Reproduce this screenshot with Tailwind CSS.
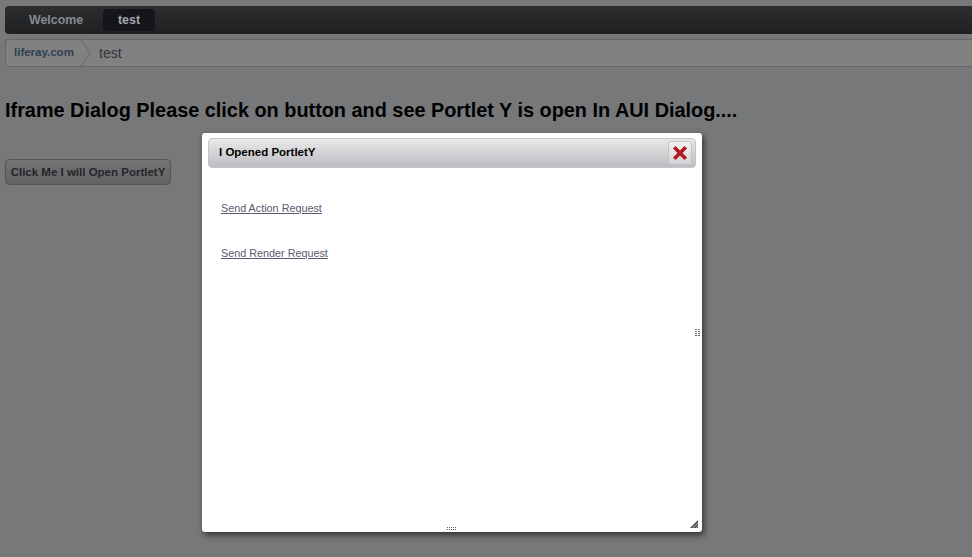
<!DOCTYPE html>
<html><head><meta charset="utf-8"><script src="https://cdn.jsdelivr.net/npm/@tailwindcss/browser@4"></script></head>
<body class="m-0 h-[557px] w-[972px] overflow-hidden relative bg-[#77787a] font-['Liberation_Sans',Arial,sans-serif]">
<div class="pl-[5px] pt-[6px]">
  <nav class="h-[28px] rounded-l-[4px] bg-gradient-to-b from-[#2c2e2f] to-[#1e2021] flex items-center pl-[24px] text-[12.4px] font-bold">
    <span class="text-[#858c90] w-[74px]">Welcome</span>
    <span class="w-[52px] h-[22px] rounded-[4px] bg-[#141619] text-[#a6a8ac] flex items-center justify-center">test</span>
  </nav>
  <div class="mt-[5px] h-[28px] rounded-l-[4px] border border-r-0 border-[#666767] bg-[#818181] flex items-center relative">
    <span class="text-[11.5px] font-bold text-[#2d3f55] pl-[8px] w-[93px]">liferay.com</span>
    <svg class="absolute left-[74px] top-[-1px]" width="12" height="28" viewBox="0 0 12 28"><path d="M0.5 0 L10.5 14 L0.5 28" fill="#818181" stroke="#666767"/></svg>
    <span class="text-[14px] text-[#2f353d]">test</span>
  </div>
  <h1 class="mt-[31px] text-[19.87px] leading-[24px] font-bold text-black">Iframe Dialog Please click on button and see Portlet Y is open In AUI Dialog....</h1>
  <button class="mt-[37px] w-[166px] h-[26px] pt-[1px] rounded-[4px] border border-[#555657] bg-gradient-to-b from-[#747474] to-[#626262] text-[11.5px] font-bold text-[#25252c] flex items-center justify-center whitespace-nowrap">Click Me I will Open PortletY</button>
</div>
<div class="absolute left-[202px] top-[133px] w-[500px] h-[399px] bg-white rounded-[3px] shadow-[2px_3px_6px_rgba(0,0,0,0.6)]">
  <div class="mx-[6px] mt-[5px] h-[30px] rounded-[4px] border border-[#c4c4c6] bg-gradient-to-b from-[#e9e9eb] to-[#bebec2] flex items-center justify-between pl-[10px] pr-[3px]">
    <span class="text-[11.5px] font-bold text-black">I Opened PortletY</span>
    <span class="w-[24px] h-[24px] rounded-[3px] border border-[#c2c2c4] bg-gradient-to-b from-[#f3f3f4] to-[#d2d2d4] flex items-center justify-center">
      <svg width="14" height="14" viewBox="0 0 14 14"><path d="M2.5 2.5 L11.5 11.5 M11.5 2.5 L2.5 11.5" stroke="#b5161c" stroke-width="3.6" stroke-linecap="square"/></svg>
    </span>
  </div>
  <div class="pl-[19px] pt-[34px] text-[10.8px] leading-[13px] text-[#5a5a6e] flex flex-col gap-[32px]">
    <a class="underline">Send Action Request</a>
    <a class="underline">Send Render Request</a>
  </div>
  <div class="absolute right-[2px] top-[196px] grid grid-cols-2 gap-[1px]">
    <i class="w-[2px] h-[1px] bg-[#777]"></i><i class="w-[2px] h-[1px] bg-[#777]"></i><i class="w-[2px] h-[1px] bg-[#777]"></i><i class="w-[2px] h-[1px] bg-[#777]"></i><i class="w-[2px] h-[1px] bg-[#777]"></i><i class="w-[2px] h-[1px] bg-[#777]"></i><i class="w-[2px] h-[1px] bg-[#555]"></i><i class="w-[2px] h-[1px] bg-[#555]"></i>
  </div>
  <div class="absolute left-[245px] bottom-[2px] grid grid-cols-5 gap-x-[1px] gap-y-[1px]">
    <i class="w-[1px] h-[1px] bg-[#666]"></i><i class="w-[1px] h-[1px] bg-[#666]"></i><i class="w-[1px] h-[1px] bg-[#666]"></i><i class="w-[1px] h-[1px] bg-[#666]"></i><i class="w-[1px] h-[1px] bg-[#666]"></i><i class="w-[1px] h-[1px] bg-[#555]"></i><i class="w-[1px] h-[1px] bg-[#555]"></i><i class="w-[1px] h-[1px] bg-[#555]"></i><i class="w-[1px] h-[1px] bg-[#555]"></i><i class="w-[1px] h-[1px] bg-[#555]"></i>
  </div>
  <svg class="absolute right-[4px] bottom-[4px]" width="8" height="8" viewBox="0 0 8 8"><path d="M0 8 L8 0 L8 8 Z" fill="#555"/><path d="M3 8 L8 3 M6 8 L8 6" stroke="#ccc" stroke-width="0.7"/></svg>
</div>
</body></html>
